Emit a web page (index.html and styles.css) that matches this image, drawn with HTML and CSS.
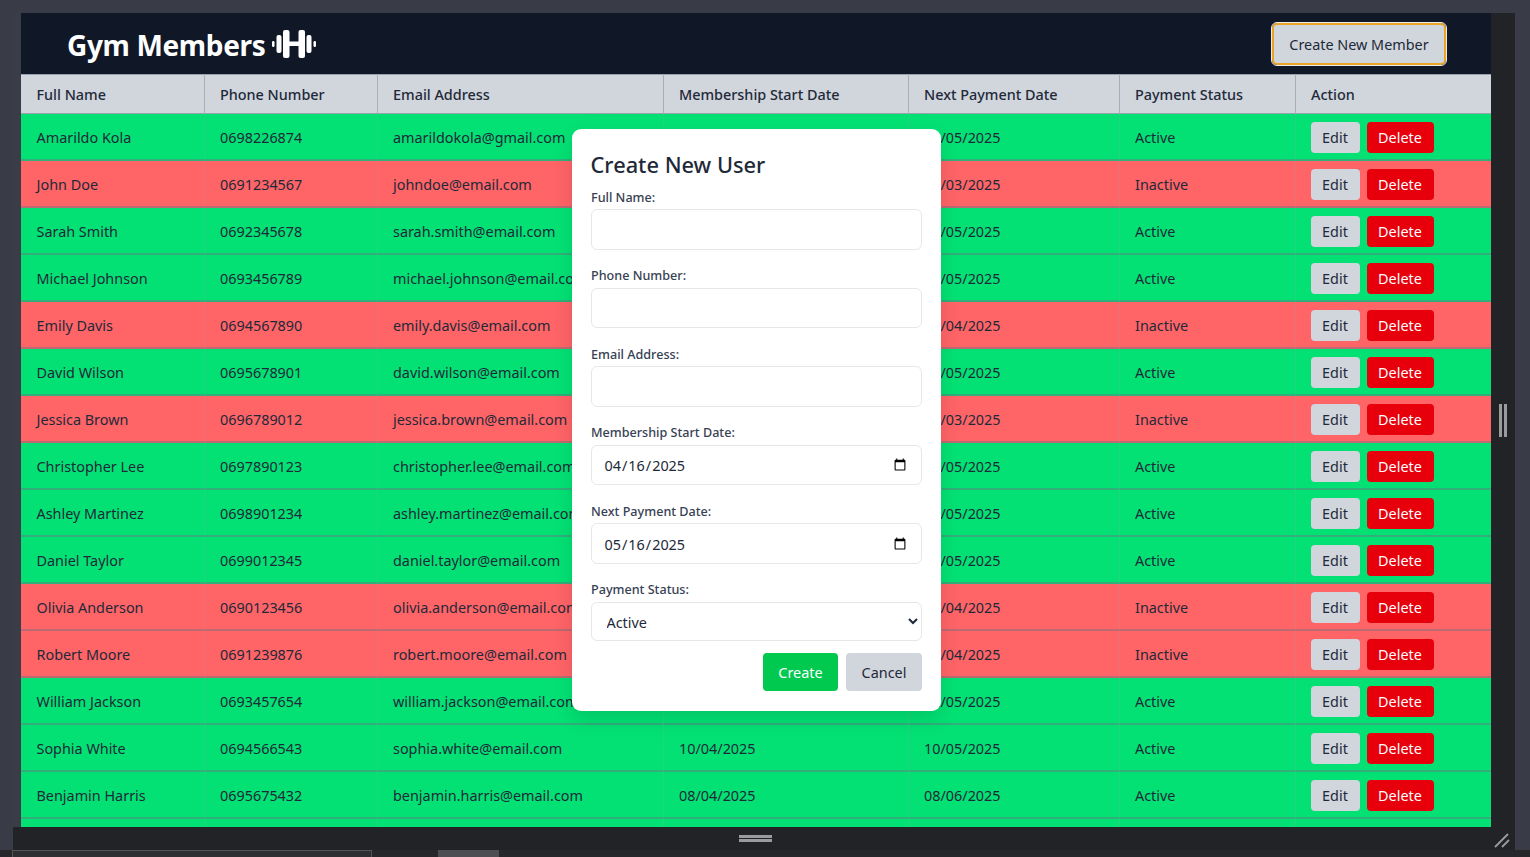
FILE: index.html
```html
<!DOCTYPE html>
<html lang="en">
<head>
<meta charset="utf-8">
<title>Gym Members</title>
<link rel="stylesheet" href="styles.css">
</head>
<body>
<div class="frame">
  <div class="content">
    <div class="viewport">
      <header class="topbar">
        <h1 class="brand">Gym Members
          <svg class="brand-icon" viewBox="0 0 44 28" aria-hidden="true">
            <rect x="0" y="11" width="2.5" height="6" rx="1.2"/>
            <rect x="4.5" y="5" width="5" height="18" rx="2"/>
            <rect x="11" y="0" width="6.5" height="28" rx="2"/>
            <rect x="17" y="11.5" width="10" height="4.5"/>
            <rect x="26.5" y="0" width="6.5" height="28" rx="2"/>
            <rect x="34.5" y="5" width="5" height="18" rx="2"/>
            <rect x="41.5" y="11" width="2.5" height="6" rx="1.2"/>
          </svg>
        </h1>
        <button class="create-btn" type="button">Create New Member</button>
      </header>
      <table class="members">
        <colgroup>
          <col class="c1"><col class="c2"><col class="c3"><col class="c4"><col class="c5"><col class="c6"><col class="c7">
        </colgroup>
        <thead>
          <tr><th>Full Name</th><th>Phone Number</th><th>Email Address</th><th>Membership Start Date</th><th>Next Payment Date</th><th>Payment Status</th><th>Action</th></tr>
        </thead>
        <tbody>
          <tr class="on"><td>Amarildo Kola</td><td>0698226874</td><td>amarildokola@gmail.com</td><td></td><td>16/05/2025</td><td>Active</td><td><span class="acts"><button class="edit">Edit</button><button class="del">Delete</button></span></td></tr>
          <tr class="off"><td>John Doe</td><td>0691234567</td><td>johndoe@email.com</td><td></td><td>01/03/2025</td><td>Inactive</td><td><span class="acts"><button class="edit">Edit</button><button class="del">Delete</button></span></td></tr>
          <tr class="on"><td>Sarah Smith</td><td>0692345678</td><td>sarah.smith@email.com</td><td></td><td>15/05/2025</td><td>Active</td><td><span class="acts"><button class="edit">Edit</button><button class="del">Delete</button></span></td></tr>
          <tr class="on"><td>Michael Johnson</td><td>0693456789</td><td>michael.johnson@email.com</td><td></td><td>10/05/2025</td><td>Active</td><td><span class="acts"><button class="edit">Edit</button><button class="del">Delete</button></span></td></tr>
          <tr class="off"><td>Emily Davis</td><td>0694567890</td><td>emily.davis@email.com</td><td></td><td>05/04/2025</td><td>Inactive</td><td><span class="acts"><button class="edit">Edit</button><button class="del">Delete</button></span></td></tr>
          <tr class="on"><td>David Wilson</td><td>0695678901</td><td>david.wilson@email.com</td><td></td><td>12/05/2025</td><td>Active</td><td><span class="acts"><button class="edit">Edit</button><button class="del">Delete</button></span></td></tr>
          <tr class="off"><td>Jessica Brown</td><td>0696789012</td><td>jessica.brown@email.com</td><td></td><td>20/03/2025</td><td>Inactive</td><td><span class="acts"><button class="edit">Edit</button><button class="del">Delete</button></span></td></tr>
          <tr class="on"><td>Christopher Lee</td><td>0697890123</td><td>christopher.lee@email.com</td><td></td><td>18/05/2025</td><td>Active</td><td><span class="acts"><button class="edit">Edit</button><button class="del">Delete</button></span></td></tr>
          <tr class="on"><td>Ashley Martinez</td><td>0698901234</td><td>ashley.martinez@email.com</td><td></td><td>22/05/2025</td><td>Active</td><td><span class="acts"><button class="edit">Edit</button><button class="del">Delete</button></span></td></tr>
          <tr class="on"><td>Daniel Taylor</td><td>0699012345</td><td>daniel.taylor@email.com</td><td></td><td>25/05/2025</td><td>Active</td><td><span class="acts"><button class="edit">Edit</button><button class="del">Delete</button></span></td></tr>
          <tr class="off"><td>Olivia Anderson</td><td>0690123456</td><td>olivia.anderson@email.com</td><td></td><td>08/04/2025</td><td>Inactive</td><td><span class="acts"><button class="edit">Edit</button><button class="del">Delete</button></span></td></tr>
          <tr class="off"><td>Robert Moore</td><td>0691239876</td><td>robert.moore@email.com</td><td></td><td>14/04/2025</td><td>Inactive</td><td><span class="acts"><button class="edit">Edit</button><button class="del">Delete</button></span></td></tr>
          <tr class="on"><td>William Jackson</td><td>0693457654</td><td>william.jackson@email.com</td><td></td><td>02/05/2025</td><td>Active</td><td><span class="acts"><button class="edit">Edit</button><button class="del">Delete</button></span></td></tr>
          <tr class="on"><td>Sophia White</td><td>0694566543</td><td>sophia.white@email.com</td><td>10/04/2025</td><td>10/05/2025</td><td>Active</td><td><span class="acts"><button class="edit">Edit</button><button class="del">Delete</button></span></td></tr>
          <tr class="on"><td>Benjamin Harris</td><td>0695675432</td><td>benjamin.harris@email.com</td><td>08/04/2025</td><td>08/06/2025</td><td>Active</td><td><span class="acts"><button class="edit">Edit</button><button class="del">Delete</button></span></td></tr>
          <tr class="on"><td></td><td></td><td></td><td></td><td></td><td></td><td><span class="acts"><button class="edit"></button><button class="del"></button></span></td></tr>
        </tbody>
      </table>
      <form class="modal">
        <h2 class="modal-title">Create New User</h2>
        <label class="field"><span class="lbl">Full Name:</span><input class="ctl" type="text"></label>
        <label class="field"><span class="lbl">Phone Number:</span><input class="ctl" type="text"></label>
        <label class="field"><span class="lbl">Email Address:</span><input class="ctl" type="email"></label>
        <label class="field"><span class="lbl">Membership Start Date:</span><input class="ctl date" type="date" value="2025-04-16"></label>
        <label class="field"><span class="lbl">Next Payment Date:</span><input class="ctl date" type="date" value="2025-05-16"></label>
        <label class="field"><span class="lbl">Payment Status:</span><select class="ctl sel"><option>Active</option><option>Inactive</option></select></label>
        <div class="modal-actions">
          <button class="btn-create" type="button">Create</button>
          <button class="btn-cancel" type="button">Cancel</button>
        </div>
      </form>
    </div>
    <div class="side-gutter"><span class="grip-v"></span></div>
  </div>
  <div class="bottom-gutter">
    <span class="grip-h"></span>
    <svg class="resize" viewBox="0 0 16 16" aria-hidden="true"><path d="M1 15 14 2M8 15 15 8"/></svg>
  </div>
</div>
<div class="tabstrip"><span class="tab-a"></span><span class="tab-b"></span></div>
</body>
</html>
```

FILE: styles.css
```css
* { box-sizing: border-box; }
html, body { margin: 0; height: 857px; overflow: hidden; }
body {
  background: #393c46;
  font-family: "Noto Sans", "Open Sans", sans-serif;
  color: #1e2939;
  padding-top: 13px;
}
.frame { margin-left: 13px; width: 1502px; height: 837px; display: flex; flex-direction: column; }
.content { display: flex; height: 814px; padding-left: 8px; background: linear-gradient(90deg, #3a3d47 8px, #222327 8px); }
.viewport { position: relative; width: 1470px; height: 814px; overflow: hidden; background: #101828; }
.side-gutter { flex: 1; display: flex; align-items: center; justify-content: center; background: #222327; }
.grip-v { width: 8px; height: 33px; border-left: 3px solid #9a9b9d; border-right: 3px solid #9a9b9d; }
.bottom-gutter { position: relative; flex: 1; display: flex; align-items: center; justify-content: center; background: #222327; }
.grip-h { width: 33px; height: 7px; margin-left: -17px; border-top: 3px solid #9a9b9d; border-bottom: 3px solid #9a9b9d; }
.resize { position: absolute; right: 5px; top: 5px; width: 16px; height: 16px; fill: none; stroke: #9a9b9d; stroke-width: 1.8; }
.tabstrip { display: flex; height: 7px; background: #26272b; padding-left: 12px; }
.tab-a { width: 360px; border: 1px solid #555; border-bottom: 0; background: #2e2f33; }
.tab-b { width: 61px; margin-left: 66px; background: #4d4e52; }

.topbar { display: flex; justify-content: space-between; align-items: center; height: 61px; padding: 1px 45px 0 46px; background: #101828; }
.brand { display: flex; align-items: center; gap: 7px; margin: 1px 0 0; color: #fff; font-size: 28px; font-weight: 700; letter-spacing: -0.35px; }
.brand-icon { width: 44px; height: 28px; margin-top: -1px; fill: #fff; }
.create-btn { width: 174px; height: 42px; padding: 0; border: 2px solid #e9a426; outline: 1px solid #e9eaec; border-radius: 5px; background: #d1d5dc; color: #1e2939; font: 400 14.4px "Noto Sans", sans-serif; }

.members { width: 1470px; table-layout: fixed; border-collapse: separate; border-spacing: 0; font-size: 14.4px; }
.c1 { width: 184px; } .c2 { width: 173px; } .c3 { width: 286px; } .c4 { width: 245px; } .c5 { width: 211px; } .c6 { width: 176px; } .c7 { width: 195px; }
th { height: 40px; padding: 0 15px; text-align: left; background: #d1d5dc; font-weight: 500; border-top: 1px solid #99a1af; border-bottom: 1px solid #99a1af; border-right: 1px solid #a9afba; }
td { height: 47px; padding: 2px 15px 0 15px; white-space: nowrap; overflow: hidden; border-right: 1px solid rgba(153,161,175,.22); border-bottom: 2px solid rgba(106,114,130,.45); color: #1e2939; }
th:first-child, td:first-child { padding-left: 15.5px; }
th:last-child, td:last-child { border-right: 0; }
td:last-child { padding-left: 14.5px; }
.on td { background: #03e174; }
.off td { background: #ff6467; }
.acts { display: flex; gap: 7px; }
.edit, .del { height: 31px; padding: 0; border: 0; border-radius: 4px; font: 400 14.4px "Noto Sans", sans-serif; }
.edit { width: 49px; background: #d1d5dc; color: #1e2939; }
.del { width: 67px; background: #e7000b; color: #fff; }

.modal { position: absolute; left: 551px; top: 116px; width: 369px; height: 582px; padding: 19px 19px; background: #fff; border-radius: 9px; box-shadow: 0 8px 20px rgba(0,0,0,.12); }
.modal-title { margin: 3px 0 10px -0.5px; font-size: 21.8px; line-height: 28px; font-weight: 500; color: #1e2939; }
.field { display: block; margin-bottom: 17.6px; }
.lbl { display: block; height: 20.4px; font-size: 12.6px; line-height: 18px; font-weight: 500; color: #364153; }
.ctl { display: block; width: 100%; height: 40.5px; padding: 0 12px; border: 1px solid #e5e7eb; border-radius: 6px; background: #fff; color: #1e2939; font: 400 14.4px "Noto Sans", sans-serif; }
.date { padding: 1px 12px 0 11.5px; }
.sel { height: 39.5px; padding: 1px 0 0 10.5px; }
.modal-actions { display: flex; justify-content: flex-end; gap: 8px; margin-top: -5.6px; }
.btn-create, .btn-cancel { height: 38px; padding: 0; border: 0; border-radius: 4px; font: 400 14.4px "Noto Sans", sans-serif; }
.btn-create { width: 75px; background: #00c950; color: #fff; }
.btn-cancel { width: 76px; background: #d1d5dc; color: #1e2939; }
```
